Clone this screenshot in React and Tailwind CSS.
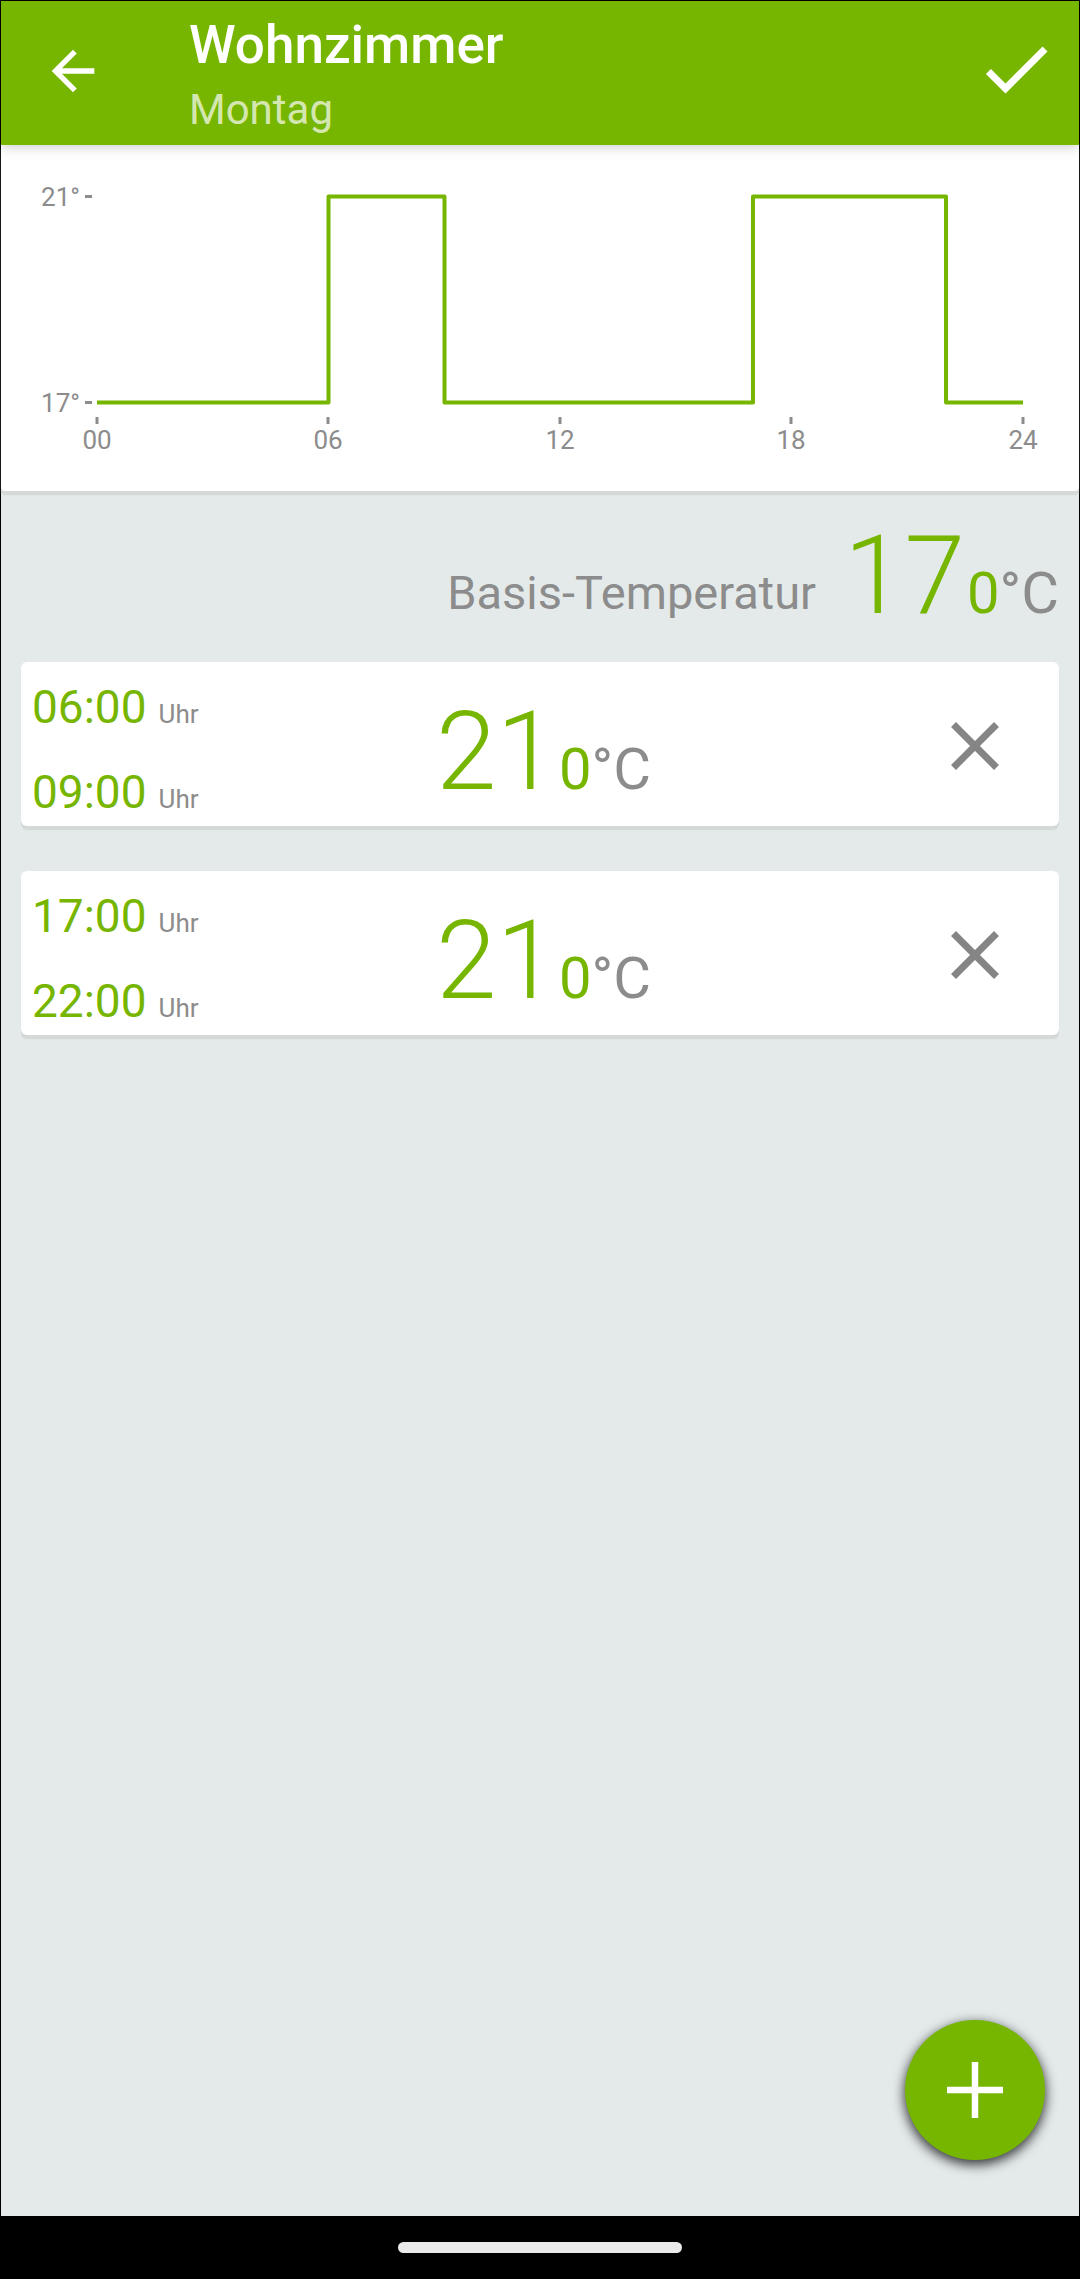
import React from "react";

const PERIODS = [
  { from: "06:00", to: "09:00", whole: "21", tenth: "0" },
  { from: "17:00", to: "22:00", whole: "21", tenth: "0" },
];

function Temperature({ whole, tenth, label }) {
  return (
    <button
      type="button"
      aria-label={label}
      className="flex items-baseline text-[58px] leading-none text-[#76b500]"
    >
      <span className="text-[109px] leading-[130px] font-light">{whole}</span>
      <span className="ml-0.5">{tenth}</span>
      <span className="text-[#8c8c8c]">°C</span>
    </button>
  );
}

function Time({ value }) {
  return (
    <button type="button" className="flex items-baseline gap-3 text-[#76b500]">
      <span className="text-[46px] leading-[48px]">{value}</span>
      <span className="text-[26px] leading-none text-[#8c8c8c]">Uhr</span>
    </button>
  );
}

function Chart() {
  const hours = [
    [96, "00"],
    [327, "06"],
    [559, "12"],
    [790, "18"],
    [1022, "24"],
  ];
  return (
    <svg
      viewBox="0 0 1078 346"
      className="block w-full"
      role="img"
      aria-label="Temperaturverlauf"
      fontSize="26"
      fill="#8c8c8c"
    >
      <text x="79" y="61" textAnchor="end">21°</text>
      <text x="79" y="267" textAnchor="end">17°</text>
      <path d="M84 51.500h7M84 257.500h7" stroke="#8c8c8c" strokeWidth="3" />
      {hours.map(([x, text]) => (
        <g key={text}>
          <path d={`M${x} 272v7`} stroke="#8c8c8c" strokeWidth="3" />
          <text x={x} y="304" textAnchor="middle">{text}</text>
        </g>
      ))}
      <path
        d="M96 257.500H327.500V51.500H443.500V257.500H752V51.500H945V257.500H1022"
        fill="none"
        stroke="#76b500"
        strokeWidth="4"
        strokeLinejoin="round"
      />
    </svg>
  );
}

function Period({ from, to, whole, tenth }) {
  return (
    <li className="grid grid-cols-[1fr_auto_1fr] items-center rounded-md bg-white pl-[11px] shadow-[0_4px_1px_#d4d8d7]">
      <div className="flex flex-col items-start gap-[37px] pt-[21px] pb-[10px]">
        <Time value={from} />
        <Time value={to} />
      </div>
      <div className="pt-4 pr-1">
        <Temperature whole={whole} tenth={tenth} label={`Temperatur ${from} bis ${to}`} />
      </div>
      <button
        type="button"
        aria-label="Zeitraum entfernen"
        className="mt-1 mr-[60px] justify-self-end"
      >
        <svg viewBox="0 0 48 48" className="size-12" stroke="#858585" strokeWidth="7">
          <path d="M2.500 2.500l43 43M45.500 2.500l-43 43" />
        </svg>
      </button>
    </li>
  );
}

export default function App() {
  return (
    <div className="flex min-h-screen flex-col bg-black font-['Roboto',sans-serif]">
      <div className="relative flex grow flex-col border-x border-t border-black bg-[#e4eaea]">
        <header className="z-10 flex items-start bg-[#76b500] pr-[21px] pl-10 text-white shadow-[0_2px_12px_rgba(0,0,0,0.2)]">
          <button type="button" aria-label="Zurück" className="mt-[38px]">
            <svg viewBox="0 0 24 24" className="size-16" fill="currentColor">
              <path d="M20 11H7.830l5.590-5.590L12 4l-8 8 8 8 1.410-1.410L7.830 13H20z" />
            </svg>
          </button>
          <div className="grow pt-[14px] pb-[10px] pl-[84px]">
            <h1 className="text-[53px] leading-[60px] font-medium">Wohnzimmer</h1>
            <p className="mt-2.5 text-[42px] leading-[50px] text-white/70">Montag</p>
          </div>
          <button type="button" aria-label="Speichern" className="mt-[26px]">
            <svg viewBox="0 0 24 24" className="size-[84px]" fill="currentColor">
              <path d="M9 16.170L4.830 12l-1.420 1.410L9 19 21 7l-1.410-1.410z" />
            </svg>
          </button>
        </header>

        <main className="grow">
          <section className="rounded-b bg-white shadow-[0_4px_1px_#d4d8d7]">
            <Chart />
          </section>

          <section className="flex items-end justify-end gap-7 pt-5 pr-5">
            <h2 className="pb-5 text-[47px] leading-[56px] text-[#8c8c8c]">Basis-Temperatur</h2>
            <Temperature whole="17" tenth="0" label="Basis-Temperatur" />
          </section>

          <ul className="mt-[21px] flex flex-col gap-[45px] px-5">
            {PERIODS.map((period) => (
              <Period key={period.from} {...period} />
            ))}
          </ul>
        </main>

        <button
          type="button"
          aria-label="Zeitraum hinzufügen"
          className="absolute right-[34px] bottom-14 flex size-[140px] items-center justify-center rounded-full bg-[#76b500] shadow-[0_4px_12px_1px_rgba(0,0,0,0.75)]"
        >
          <svg viewBox="0 0 56 56" className="size-14" stroke="white" strokeWidth="6.500">
            <path d="M28 0v56M0 28h56" />
          </svg>
        </button>
      </div>

      <footer className="flex h-[63px] items-center justify-center bg-black">
        <div className="h-[11px] w-[284px] rounded-full bg-[#eaeaea]" />
      </footer>
    </div>
  );
}
